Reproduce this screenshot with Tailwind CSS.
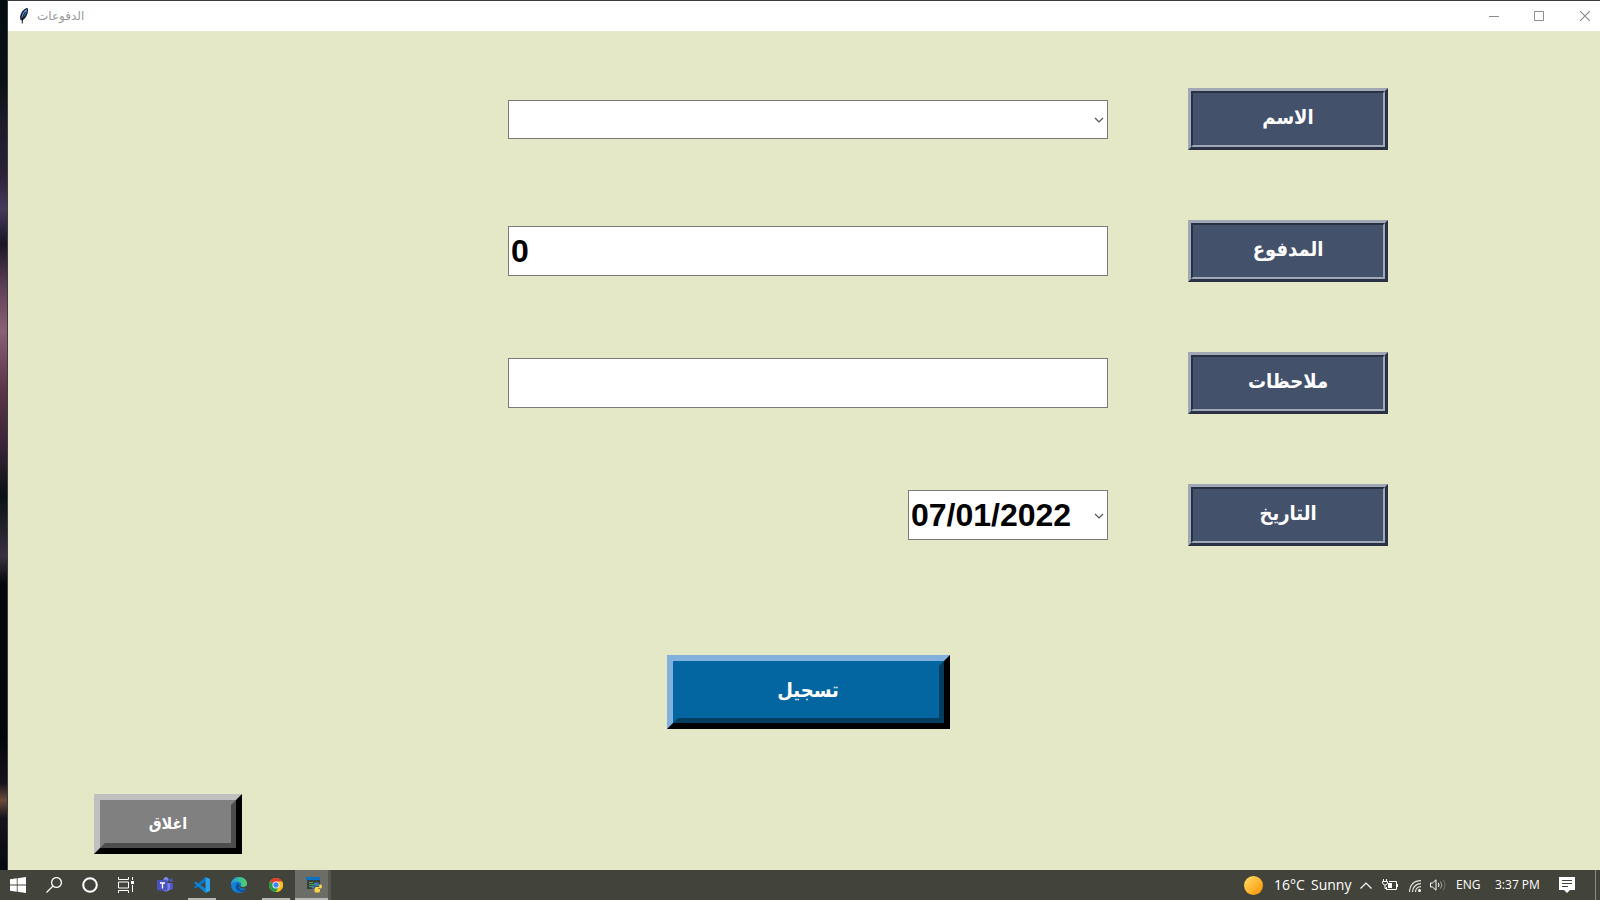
<!DOCTYPE html>
<html lang="ar">
<head>
<meta charset="utf-8">
<title>الدفوعات</title>
<script src="https://cdn.jsdelivr.net/npm/@tailwindcss/browser@4"></script>
</head>
<body class="flex min-h-screen flex-col bg-[#0b0c12] font-['Liberation_Sans','DejaVu_Sans_Condensed','DejaVu_Sans',sans-serif]">
<div class="flex grow bg-[linear-gradient(#050c10_0%,#0a1016_9%,#1c1a28_14%,#2a2138_20%,#453a5c_24%,#1c1626_28%,#5e4055_33%,#8a5f78_38%,#5a3446_45%,#3a2438_51%,#081216_57%,#3a3040_64%,#05080c_67%,#05060a_85%,#15131c_90%,#6b4a3c_92%,#15131c_94%,#08080f_100%)] pl-[7px]">
<main class="flex grow flex-col border-t border-l border-[#3c3c40] bg-[#e4e8c6]">
  <header class="flex h-[30px] items-center bg-white pl-2">
    <svg class="size-4" viewBox="0 0 16 16" aria-hidden="true">
      <path d="M10.500 0C7 1.500 4.500 5 4 9l.5 3 1.500.5C9.500 11 12.500 6 12 .5z" fill="#182230"/>
      <path d="M10.200 1.200C7.500 3.500 5.800 6 5.500 10.500 8.500 8.500 10.800 5 11 1.500z" fill="#5b95e0"/>
      <path d="M9.500 4C7.500 7 6.500 9 6.200 15.500" stroke="#111820" fill="none"/>
    </svg>
    <h1 class="ml-[5px] font-['DejaVu_Sans',sans-serif] text-[12px] leading-4 text-[#999]" dir="rtl">الدفوعات</h1>
    <div class="ml-auto flex h-full text-[#8d8d8d]">
      <button type="button" aria-label="Minimize" class="flex w-[45px] items-center justify-center"><svg class="size-[10px]" viewBox="0 0 10 10"><path d="M0 5.500h10" stroke="currentColor"/></svg></button>
      <button type="button" aria-label="Maximize" class="flex w-[45px] items-center justify-center"><svg class="size-[10px]" viewBox="0 0 10 10"><path d="M.5.5h9v9h-9z" fill="none" stroke="currentColor"/></svg></button>
      <button type="button" aria-label="Close" class="flex w-[39px] items-center justify-center pl-[9px]"><svg class="size-[10px]" viewBox="0 0 10 10"><path d="M0 0 10 10M10 0 0 10" stroke="currentColor" stroke-width="1.200"/></svg></button>
    </div>
  </header>

  <form class="flex grow flex-col pt-[57px] pb-4">
    <div class="grid grid-cols-[minmax(0,600px)_200px] items-center justify-end gap-x-20 gap-y-[70px] pr-[212px]">
      <div class="relative">
        <select id="name" class="block h-[39px] w-full appearance-none border border-[#7a7a7a] bg-white px-1 text-2xl font-bold"><option></option></select>
        <svg class="pointer-events-none absolute top-4 right-1 h-2 w-[10px]" viewBox="0 0 10 8"><path d="m1 2 4 4 4-4" fill="none" stroke="#555" stroke-width="1.200"/></svg>
      </div>
      <label for="name" class="flex h-[62px] border-3 border-t-[#a0a8b6] border-r-[#2a3144] border-b-[#2a3144] border-l-[#a0a8b6] bg-[#44516b] text-white"><span dir="rtl" class="flex grow items-center justify-center border-2 border-t-[#2a3144] border-r-[#a0a8b6] border-b-[#a0a8b6] border-l-[#2a3144] pb-1 text-[20px] font-bold">الاسم</span></label>

      <input id="paid" type="text" value="0" class="h-[50px] w-full border border-[#7a7a7a] bg-white px-[2px] text-[32px] font-bold">
      <label for="paid" class="flex h-[62px] border-3 border-t-[#a0a8b6] border-r-[#2a3144] border-b-[#2a3144] border-l-[#a0a8b6] bg-[#44516b] text-white"><span dir="rtl" class="flex grow items-center justify-center border-2 border-t-[#2a3144] border-r-[#a0a8b6] border-b-[#a0a8b6] border-l-[#2a3144] pb-1 text-[20px] font-bold">المدفوع</span></label>

      <input id="notes" type="text" class="h-[50px] w-full border border-[#7a7a7a] bg-white px-[2px] text-[32px] font-bold">
      <label for="notes" class="flex h-[62px] border-3 border-t-[#a0a8b6] border-r-[#2a3144] border-b-[#2a3144] border-l-[#a0a8b6] bg-[#44516b] text-white"><span dir="rtl" class="flex grow items-center justify-center border-2 border-t-[#2a3144] border-r-[#a0a8b6] border-b-[#a0a8b6] border-l-[#2a3144] pb-1 text-[20px] font-bold">ملاحظات</span></label>

      <div class="relative w-[200px] justify-self-end">
        <select id="date" class="block h-[50px] w-full appearance-none border border-[#7a7a7a] bg-white px-[2px] text-[32px] font-bold"><option>07/01/2022</option></select>
        <svg class="pointer-events-none absolute top-[22px] right-1 h-2 w-[10px]" viewBox="0 0 10 8"><path d="m1 2 4 4 4-4" fill="none" stroke="#555" stroke-width="1.200"/></svg>
      </div>
      <label for="date" class="flex h-[62px] border-3 border-t-[#a0a8b6] border-r-[#2a3144] border-b-[#2a3144] border-l-[#a0a8b6] bg-[#44516b] text-white"><span dir="rtl" class="flex grow items-center justify-center border-2 border-t-[#2a3144] border-r-[#a0a8b6] border-b-[#a0a8b6] border-l-[#2a3144] pb-1 text-[20px] font-bold">التاريخ</span></label>

      <button type="submit" class="mt-[39px] flex h-[74px] w-[283px] justify-self-center border-6 border-t-[#82b1dd] border-r-black border-b-black border-l-[#82b1dd] bg-[#0466a0] text-white"><span dir="rtl" class="flex h-full grow items-center justify-center border-5 border-t-[#0466a0] border-r-[#033d60] border-b-[#033d60] border-l-[#0466a0] pb-1 text-[20px] font-bold">تسجيل</span></button>
    </div>
    <button type="button" class="mt-auto ml-[86px] flex h-[60px] w-[148px] border-6 border-t-[#c0c0c0] border-r-black border-b-black border-l-[#c0c0c0] bg-[#808080] text-white"><span dir="rtl" class="flex h-full grow items-center justify-center border-5 border-t-[#808080] border-r-[#4d4d4d] border-b-[#4d4d4d] border-l-[#808080] text-[16px] font-bold">اغلاق</span></button>
  </form>
</main>
</div>

<footer lang="en" class="flex h-[30px] items-center bg-[#42433a] font-['Open_Sans','Noto_Sans',sans-serif] text-white">
  <nav class="flex h-full items-stretch" aria-label="Taskbar">
    <button type="button" aria-label="Start" class="flex w-9 items-center justify-center"><svg class="size-4" viewBox="0 0 16 16" fill="#fff"><path d="M0 2.300 6.800 1.300V7.600H0zM7.600 1.200 16 0V7.600H7.600zM0 8.400H6.800V14.700L0 13.700zM7.600 8.400H16V16L7.600 14.800z"/></svg></button>
    <button type="button" aria-label="Search" class="flex w-9 items-center justify-center"><svg class="size-4" viewBox="0 0 16 16" fill="none" stroke="#fff" stroke-width="1.300"><circle cx="10.500" cy="5.500" r="4.900"/><path d="M7 9 .5 15.500"/></svg></button>
    <button type="button" aria-label="Cortana" class="flex w-9 items-center justify-center"><svg class="size-4" viewBox="0 0 16 16" fill="none" stroke="#fff" stroke-width="2"><circle cx="8" cy="8" r="6.800"/></svg></button>
    <button type="button" aria-label="Task view" class="flex w-9 items-center justify-center"><svg class="size-4" viewBox="0 0 16 16" fill="none" stroke="#fff"><path d="M.5 0v2.500h10V0M.5 5h10v6H.5zM.5 16v-2.500h10V16M14.500 0v3M14.500 8v7"/><path d="M13 4h3v3h-3z" fill="#fff" stroke="none"/></svg></button>
    <div class="ml-[7px] flex gap-[9px]">
      <button type="button" aria-label="Teams" class="flex w-7 items-center justify-center"><svg class="size-4" viewBox="0 0 16 16"><circle cx="14" cy="3.200" r="1.700" fill="#5059c9"/><circle cx="9" cy="2.500" r="2.500" fill="#7b83eb"/><path d="M11 6h5v4.500a2.500 2.500 0 0 1-4 2z" fill="#5059c9"/><path d="M5 6h8v5.500a4.200 4.200 0 0 1-8 0z" fill="#7b83eb"/><rect y="3" width="10.500" height="10.500" rx="1" fill="#4b53bc"/><path d="M3 6h5M5.500 6v5.500" stroke="#fff" stroke-width="1.300"/></svg></button>
      <button type="button" aria-label="Visual Studio Code" class="flex w-7 items-center justify-center border-b-2 border-[#b9b9b5] pt-[2px]"><svg class="size-4" viewBox="0 0 16 16"><path d="M0 10.200 11.500 0v4.500L1.500 11.500z" fill="#0879c8"/><path d="M0 5.800 1.500 4.500 11.500 11.500V16z" fill="#0a86d8"/><path d="M11.500 0 16 2v12l-4.500 2z" fill="#27a3ef"/></svg></button>
      <button type="button" aria-label="Edge" class="flex w-7 items-center justify-center"><svg class="size-4" viewBox="0 0 16 16"><defs><linearGradient id="eg"><stop stop-color="#1c9ce6"/><stop offset="1" stop-color="#55d45c"/></linearGradient></defs><circle cx="8" cy="8" r="8" fill="#1180d6"/><path d="M0 8C0 3.200 3.500 0 8 0c5 0 8 3.400 8 6.500 0 2.300-1.800 3.800-4 3.800-1.700 0-2.500-.6-2.500-1.200 0-.5.700-.8.700-1.900C10.200 5.700 8.500 4.500 6 4.500 3 4.500.6 6 0 8" fill="url(#eg)"/><path d="M6.500 6.200c-1.200 1-1.700 2-1.700 3.500 0 3 2.700 5.200 5.700 5.200 1.800 0 3.500-1 4.500-2.400-3.500 1.400-7.400 0-7.400-3.500 0-1 .4-1.600 1-2.200z" fill="#0a4f9e"/><path d="M8 7.500c-.6 3 2.500 4.800 7.500 3.900l.3.800L16 9l-4 1.300c-1.700 0-2.500-.6-2.500-1.200z" fill="#42433a"/></svg></button>
      <button type="button" aria-label="Chrome" class="flex w-7 items-center justify-center border-b-2 border-[#b9b9b5] pt-[2px]"><svg class="size-[14px]" viewBox="0 0 16 16"><circle cx="8" cy="8" r="8" fill="#fbc116"/><path d="M8 8 1.070 4A8 8 0 0 1 14.930 4z" fill="#e33b2e"/><path d="M8 8 1.070 4A8 8 0 0 0 8 16l3.500-6z" fill="#229a48"/><path d="M8 4h6.930A8 8 0 0 1 8 16l3.500-6z" fill="#fbc116"/><circle cx="8" cy="8" r="4" fill="#fff"/><circle cx="8" cy="8" r="3.100" fill="#4285f4"/></svg></button>
    </div>
    <button type="button" aria-label="Python" class="ml-[5px] flex w-9 border-r-3 border-[#55564e] bg-[#6c6d66]"><span class="flex h-full w-full items-center justify-center border-b-2 border-[#b9b9b5] pt-[2px] pl-1"><svg class="size-4" viewBox="0 0 16 16"><path d="M1 1h13v11H1z" fill="#35403d"/><path d="M0 0h14v3H0z" fill="#0a73c4"/><path d="M3 5.500h4M3 7.500h6M3 9.500h3" stroke="#4ca64c"/><path d="M8 5.500h3.500q1.500 0 1.500 1.500v2.500H9q-1 0-1 2H6.500Q5.500 11.500 5.500 10T7 8.500h3V8H8z" fill="#3f7db5"/><path d="M13.200 7.500H14.500q1.500 0 1.500 2t-1.500 2H12v.5h2v2q0 1.500-2 1.500H10q-1.500 0-1.500-1.500V11.500q0-1.500 1.500-1.500h3.200z" fill="#fcd34b"/></svg></span></button>
  </nav>
  <div class="ml-auto flex h-full items-center">
    <button type="button" class="flex items-center text-[14px] leading-5"><svg class="mr-[11px] size-[19px]" viewBox="0 0 19 19"><defs><linearGradient id="sun" x2="1" y2="1"><stop stop-color="#ffe06a"/><stop offset="1" stop-color="#ff9000"/></linearGradient></defs><circle cx="9.500" cy="9.500" r="9.500" fill="url(#sun)"/></svg><span class="w-[37px] text-left">16°C</span><span class="w-[49px] text-left">Sunny</span></button>
    <button type="button" aria-label="Show hidden icons"><svg class="h-[7px] w-3" viewBox="0 0 12 7" fill="none" stroke="#fff" stroke-width="1.200"><path d="m.5 6.500 5.500-5.500 5.500 5.500"/></svg></button>
    <svg class="ml-[10px] h-3 w-4" viewBox="0 0 16 12" fill="none" stroke="#fff"><path d="M7 2.500h7.500v8h-10V8M15.500 5v3M1.500 0v2M4.500 0v2"/><path d="M.5 2.500h5v1.500L4 6H2L.5 4zM3 6v3.500h1.500"/><path d="M6 4h4v5H6z" fill="#fff" stroke="none"/></svg>
    <svg class="mt-[2px] ml-[11px] size-3" viewBox="0 0 12 12" fill="none" stroke="#fff"><path d="M.5 12C.5 5 5 .7 12 .7M3.500 12C3.500 7 7 3.700 12 3.700M6.500 12c0-3.300 2.200-5.300 5.500-5.300" stroke="#e6e6e2" stroke-width="1.200"/><circle cx="10.500" cy="10.500" r="1.500" fill="#fff" stroke="none"/></svg>
    <svg class="ml-[9px] h-3 w-4" viewBox="0 0 16 12" fill="none" stroke="#fff"><path d="M.5 4h2L6 .8v10.400L2.500 8h-2zM8.300 4q1.400 2 0 4"/><path d="M10.500 2.500q2.800 3.500 0 7" stroke="#aaa"/><path d="M13 .7q4.200 5.300 0 10.600" stroke="#77786f"/></svg>
    <span class="ml-[10px] w-[39px] text-[12px] leading-4">ENG</span>
    <time class="w-[64px] text-[12px] leading-4">3:37 PM</time>
    <button type="button" aria-label="Notifications"><svg class="size-4" viewBox="0 0 16 16"><path d="M0 0h16v13h-5l-3 3-3-3H0z" fill="#fff"/><path d="M3 3.500h10M3 6.500h10M3 9.500h6" stroke="#42433a"/></svg></button>
    <span class="mr-1 ml-5 h-full w-px bg-[#8b8c86]"></span>
  </div>
</footer>
</body>
</html>
